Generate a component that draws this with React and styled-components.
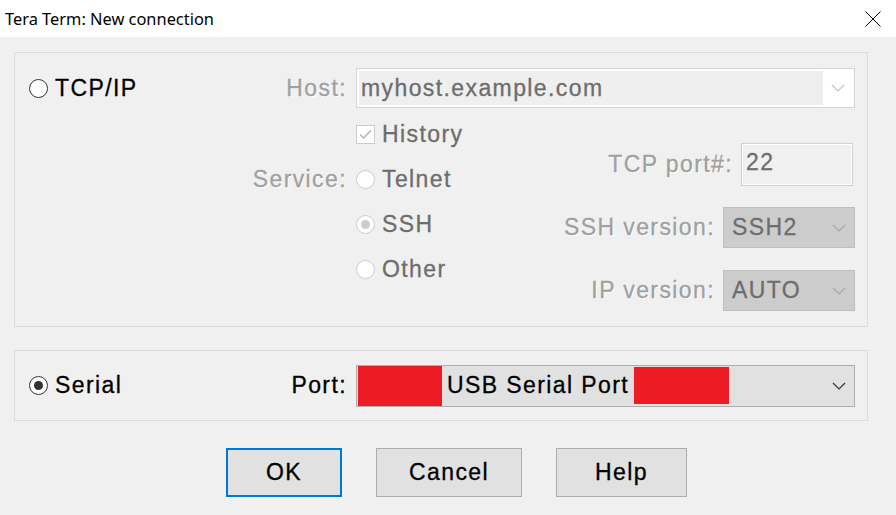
import React from "react";
import styled, { createGlobalStyle } from "styled-components";

const GlobalStyle = createGlobalStyle`
  html, body {
    margin: 0;
    padding: 0;
    background: #f0f0f0;
  }
  body {
    font-family: "Liberation Sans", Arial, sans-serif;
  }
`;

const Window = styled.div`
  width: 896px;
  height: 515px;
  display: flex;
  flex-direction: column;
  background: #f0f0f0;
  overflow: hidden;
  font-size: 23px;
  letter-spacing: 1.4px;
  -webkit-text-stroke: 0.3px currentColor;
`;

const TitleBar = styled.div`
  height: 37px;
  flex: none;
  background: #ffffff;
  display: flex;
  align-items: center;
  justify-content: space-between;
  padding: 0 15px 0 5px;
  box-sizing: border-box;
  font-family: "Noto Sans", "Open Sans", sans-serif;
  font-size: 16.4px;
  letter-spacing: 0;
  -webkit-text-stroke: 0;
  color: #000;
`;

const Body = styled.div`
  display: flex;
  flex-direction: column;
  padding: 15px 28px 0 14px;
`;

const GroupBox = styled.div`
  box-sizing: border-box;
  height: ${(p) => p.$h}px;
  border: 1px solid #dcdcdc;
  margin-top: ${(p) => p.$mt || 0}px;
  padding: ${(p) => p.$pad};
`;

const FormRow = styled.div`
  display: grid;
  grid-template-columns: 316px 499px;
  column-gap: 11px;
  align-items: center;
`;

const LeadCell = styled.div`
  display: flex;
  align-items: center;
  justify-content: space-between;
`;

const Label = styled.span`
  color: ${(p) => (p.$disabled ? "#a0a0a0" : "#000")};
  white-space: nowrap;
  margin-right: -2px;
  text-shadow: ${(p) => (p.$disabled ? "1px 1px 0 #ffffff" : "none")};
`;

const Option = styled.label`
  display: flex;
  align-items: center;
  gap: 7px;
  color: ${(p) => (p.$disabled ? "#6d6d6d" : "#000")};
  white-space: nowrap;
`;

const RadioMark = styled.span`
  box-sizing: border-box;
  width: 19px;
  height: 19px;
  border-radius: 50%;
  flex: none;
  background: #fff;
  border: 1px solid ${(p) => (p.$disabled ? "#cccccc" : "#333333")};
  display: flex;
  align-items: center;
  justify-content: center;
  &::after {
    content: "";
    display: ${(p) => (p.$checked ? "block" : "none")};
    width: 9px;
    height: 9px;
    border-radius: 50%;
    background: ${(p) => (p.$disabled ? "#cccccc" : "#333333")};
  }
`;

const CheckMark = styled.span`
  box-sizing: border-box;
  width: 19px;
  height: 19px;
  flex: none;
  background: #fff;
  border: 1px solid #cccccc;
  display: flex;
  align-items: center;
  justify-content: center;
`;

const Combo = styled.div`
  box-sizing: border-box;
  height: ${(p) => p.$h || 40}px;
  width: ${(p) => p.$w || 499}px;
  display: flex;
  align-items: center;
  border: 1px solid ${(p) => (p.$tone === "gray" ? "#bfbfbf" : p.$tone === "edit" ? "#d4d4d4" : "#adadad")};
  background: ${(p) => (p.$tone === "gray" ? "#cccccc" : p.$tone === "edit" ? "#ffffff" : "#e1e1e1")};
  color: ${(p) => (p.$tone === "gray" ? "#6d6d6d" : "#000")};
  padding: ${(p) => (p.$tone === "edit" ? "2px" : "0 1px")};
`;

const EditArea = styled.div`
  flex: 1;
  align-self: stretch;
  display: flex;
  align-items: center;
  background: #efefef;
  color: #6d6d6d;
  padding-left: 2px;
`;

const ComboText = styled.span`
  flex: 1;
  padding-left: 7px;
`;

const ArrowBox = styled.span`
  width: 29px;
  flex: none;
  display: flex;
  align-items: center;
  justify-content: center;
`;

const Redact = styled.span`
  flex: none;
  background: #ed1c24;
  width: ${(p) => p.$w}px;
  height: ${(p) => p.$h}px;
`;

const PortText = styled.span`
  padding: 0 5px 0 5px;
  color: #000;
`;

const Lower = styled.div`
  display: flex;
  justify-content: space-between;
`;

const OptionGrid = styled.div`
  display: grid;
  grid-template-columns: 316px auto;
  grid-auto-rows: 45px;
  column-gap: 11px;
  align-items: center;
  padding-top: 4px;
`;

const LabelCell = styled.div`
  justify-self: end;
  grid-column: 1;
  grid-row: ${(p) => p.$row};
`;

const OptionCell = styled.div`
  grid-column: 2;
  grid-row: ${(p) => p.$row};
`;

const SettingsCol = styled.div`
  display: flex;
  flex-direction: column;
  align-items: flex-end;
  padding-top: 35px;
`;

const SettingRow = styled.div`
  display: flex;
  align-items: center;
  gap: 10px;
  margin-top: ${(p) => p.$mt || 0}px;
  margin-right: ${(p) => p.$mr || 0}px;
`;

const PortField = styled.div`
  box-sizing: border-box;
  width: 112px;
  height: 43px;
  border: 1px solid #d0d0d0;
  box-shadow: inset 0 0 0 1px #ffffff;
  background: #f0f0f0;
  color: #6d6d6d;
  padding: 5px 0 0 4px;
`;

const ButtonRow = styled.div`
  display: flex;
  gap: 34px;
  margin-top: 27px;
  padding-left: 212px;
`;

const Button = styled.button`
  box-sizing: border-box;
  width: ${(p) => p.$w}px;
  height: 49px;
  background: #e1e1e1;
  border: ${(p) => (p.$default ? "2px solid #0078d7" : "1px solid #adadad")};
  font: inherit;
  letter-spacing: inherit;
  color: #000;
  padding: 0;
`;

const Chevron = ({ color }) => (
  <svg width="14" height="8" viewBox="0 0 14 8">
    <path d="M1 1 L7 7 L13 1" fill="none" stroke={color} strokeWidth="1.2" />
  </svg>
);

const CloseIcon = () => (
  <svg width="16" height="16" viewBox="0 0 16 16">
    <path d="M0.5 0.5 L15.5 15.5 M15.5 0.5 L0.5 15.5" stroke="#000" strokeWidth="1" />
  </svg>
);

const Radio = ({ checked, disabled, children }) => (
  <Option $disabled={disabled}>
    <RadioMark $checked={checked} $disabled={disabled} />
    {children}
  </Option>
);

export default function App() {
  return (
    <Window>
      <GlobalStyle />
      <TitleBar>
        <span>Tera Term: New connection</span>
        <CloseIcon />
      </TitleBar>
      <Body>
        <GroupBox $h={275} $pad="15px 12px 0 14px">
          <FormRow>
            <LeadCell>
              <Radio>TCP/IP</Radio>
              <Label $disabled>Host:</Label>
            </LeadCell>
            <Combo $tone="edit">
              <EditArea>myhost.example.com</EditArea>
              <ArrowBox>
                <Chevron color="#c4c4c4" />
              </ArrowBox>
            </Combo>
          </FormRow>
          <Lower>
            <OptionGrid>
              <OptionCell $row={1}>
                <Option $disabled>
                  <CheckMark>
                    <svg width="13" height="11" viewBox="0 0 13 11">
                      <path d="M1 5.5 L4.5 9 L12 1.5" fill="none" stroke="#b4b4b4" strokeWidth="1.4" />
                    </svg>
                  </CheckMark>
                  History
                </Option>
              </OptionCell>
              <LabelCell $row={2}>
                <Label $disabled>Service:</Label>
              </LabelCell>
              <OptionCell $row={2}>
                <Radio disabled>Telnet</Radio>
              </OptionCell>
              <OptionCell $row={3}>
                <Radio disabled checked>SSH</Radio>
              </OptionCell>
              <OptionCell $row={4}>
                <Radio disabled>Other</Radio>
              </OptionCell>
            </OptionGrid>
            <SettingsCol>
              <SettingRow $mr={2}>
                <Label $disabled>TCP port#:</Label>
                <PortField>22</PortField>
              </SettingRow>
              <SettingRow $mt={21}>
                <Label $disabled>SSH version:</Label>
                <Combo $tone="gray" $w={132} $h={41}>
                  <ComboText>SSH2</ComboText>
                  <ArrowBox>
                    <Chevron color="#a8a8a8" />
                  </ArrowBox>
                </Combo>
              </SettingRow>
              <SettingRow $mt={22}>
                <Label $disabled>IP version:</Label>
                <Combo $tone="gray" $w={132} $h={41}>
                  <ComboText>AUTO</ComboText>
                  <ArrowBox>
                    <Chevron color="#a8a8a8" />
                  </ArrowBox>
                </Combo>
              </SettingRow>
            </SettingsCol>
          </Lower>
        </GroupBox>
        <GroupBox $h={71} $mt={23} $pad="0 12px 0 14px">
          <FormRow style={{ height: "100%" }}>
            <LeadCell>
              <Radio checked>Serial</Radio>
              <Label>Port:</Label>
            </LeadCell>
            <Combo $h={42}>
              <Redact $w={84} $h={40} />
              <PortText>USB Serial Port</PortText>
              <Redact $w={95} $h={37} />
              <span style={{ flex: 1 }} />
              <ArrowBox>
                <Chevron color="#333333" />
              </ArrowBox>
            </Combo>
          </FormRow>
        </GroupBox>
        <ButtonRow>
          <Button $w={116} $default>OK</Button>
          <Button $w={146}>Cancel</Button>
          <Button $w={131}>Help</Button>
        </ButtonRow>
      </Body>
    </Window>
  );
}
